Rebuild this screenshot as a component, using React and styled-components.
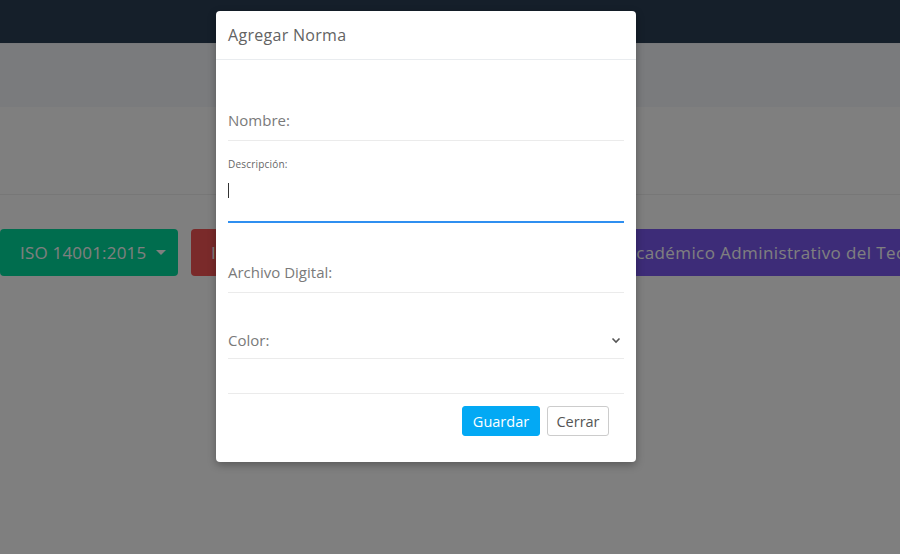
import React from "react";
import styled, { createGlobalStyle } from "styled-components";

const Global = createGlobalStyle`
  html, body { margin: 0; padding: 0; }
  body {
    width: 900px; height: 554px; overflow: hidden;
    font-family: "Open Sans", "Noto Sans", sans-serif;
    background: #ffffff;
  }
  * { box-sizing: border-box; }
`;

const Page = styled.div`
  position: relative;
  width: 900px;
  height: 554px;
  overflow: hidden;
  background: #ffffff;
`;

const NavBar = styled.div`
  height: 43px;
  background: #2a3e54;
`;

const SubBar = styled.div`
  height: 64px;
  background: #f4f6fa;
  border-top: 1px solid #eef0f4;
`;

const Banner = styled.div`
  height: 88px;
  border-bottom: 1px solid #eeeeee;
`;

const ButtonRow = styled.div`
  display: flex;
  gap: 13px;
  margin-top: 34px;
  white-space: nowrap;
  overflow: hidden;
`;

const NormButton = styled.div`
  flex-shrink: 0;
  height: 47px;
  display: flex;
  align-items: center;
  gap: 10px;
  padding: 0 20px;
  border-radius: 4px;
  background: ${(p) => p.$bg};
  color: #ffffff;
  font-size: 17px;
  letter-spacing: ${(p) => (p.$wide ? 0.4 : 0.2)}px;
  width: ${(p) => (p.$w ? `${p.$w}px` : "auto")};
`;

const Caret = styled.span`
  width: 0;
  height: 0;
  border-left: 5px solid transparent;
  border-right: 5px solid transparent;
  border-top: 5px solid #ffffff;
`;

const Overlay = styled.div`
  position: absolute;
  inset: 0;
  background: rgba(0, 0, 0, 0.5);
`;

const Modal = styled.div`
  position: absolute;
  left: 216px;
  top: 11px;
  width: 420px;
  background: #ffffff;
  border-radius: 4px;
  box-shadow: 0 3px 9px rgba(0, 0, 0, 0.3);
  display: flex;
  flex-direction: column;
`;

const Header = styled.div`
  height: 49px;
  padding: 0 12px;
  display: flex;
  align-items: center;
  border-bottom: 1px solid #e9ecef;
`;

const Title = styled.h4`
  margin: 0;
  font-size: 16px;
  font-weight: 400;
  letter-spacing: 0.3px;
  color: #636363;
`;

const Body = styled.div`
  padding: 12px 12px 0 12px;
  display: flex;
  flex-direction: column;
`;

const Field = styled.div`
  display: flex;
  align-items: center;
  justify-content: space-between;
  padding-top: ${(p) => p.$pt}px;
  padding-bottom: ${(p) => p.$pb}px;
  border-bottom: 1px solid #ebebeb;
`;

const FieldLabel = styled.span`
  font-size: 15px;
  line-height: 20px;
  color: #7a7a7a;
`;

const ActiveField = styled.div`
  display: flex;
  flex-direction: column;
  padding-top: 16px;
  padding-bottom: 21px;
  border-bottom: 2px solid #2f8ff0;
`;

const SmallLabel = styled.span`
  font-size: 10px;
  line-height: 14px;
  letter-spacing: 0.2px;
  color: #666666;
`;

const TextLine = styled.div`
  margin-top: 9px;
  height: 20px;
  display: flex;
  align-items: center;
`;

const TextCaret = styled.span`
  width: 1px;
  height: 15px;
  background: #333333;
`;

const Chevron = styled.svg`
  margin-right: 3px;
`;

const Footer = styled.div`
  margin-top: 34px;
  border-top: 1px solid #ebebeb;
  padding: 12px 15px 26px 0;
  display: flex;
  justify-content: flex-end;
  gap: 7px;
`;

const Btn = styled.button`
  height: 30px;
  width: ${(p) => (p.$primary ? 78 : 62)}px;
  padding: 0;
  border-radius: 3px;
  font-family: inherit;
  font-size: 14.5px;
  cursor: pointer;
  background: ${(p) => (p.$primary ? "#03a9f4" : "#ffffff")};
  color: ${(p) => (p.$primary ? "#ffffff" : "#555555")};
  border: 1px solid ${(p) => (p.$primary ? "#03a9f4" : "#cccccc")};
`;

export default function App() {
  return (
    <Page>
      <Global />
      <NavBar />
      <SubBar />
      <Banner />
      <ButtonRow>
        <NormButton $bg="#00da9c" $w={178}>
          ISO 14001:2015 <Caret />
        </NormButton>
        <NormButton $bg="#f45454" $w={401}>
          ISO 9001:2015 <Caret />
        </NormButton>
        <NormButton $bg="#7a58f0" $wide>
          Académico Administrativo del Tecnológico
        </NormButton>
      </ButtonRow>
      <Overlay />
      <Modal>
        <Header>
          <Title>Agregar Norma</Title>
        </Header>
        <Body>
          <Field $pt={38} $pb={10}>
            <FieldLabel>Nombre:</FieldLabel>
          </Field>
          <ActiveField>
            <SmallLabel>Descripción:</SmallLabel>
            <TextLine>
              <TextCaret />
            </TextLine>
          </ActiveField>
          <Field $pt={39} $pb={10}>
            <FieldLabel>Archivo Digital:</FieldLabel>
          </Field>
          <Field $pt={37} $pb={8}>
            <FieldLabel>Color:</FieldLabel>
            <Chevron width="10" height="7" viewBox="0 0 10 7">
              <polyline points="1.5,1.5 5,5 8.5,1.5" fill="none" stroke="#555" strokeWidth="1.6" />
            </Chevron>
          </Field>
          <Footer>
            <Btn $primary>Guardar</Btn>
            <Btn>Cerrar</Btn>
          </Footer>
        </Body>
      </Modal>
    </Page>
  );
}
